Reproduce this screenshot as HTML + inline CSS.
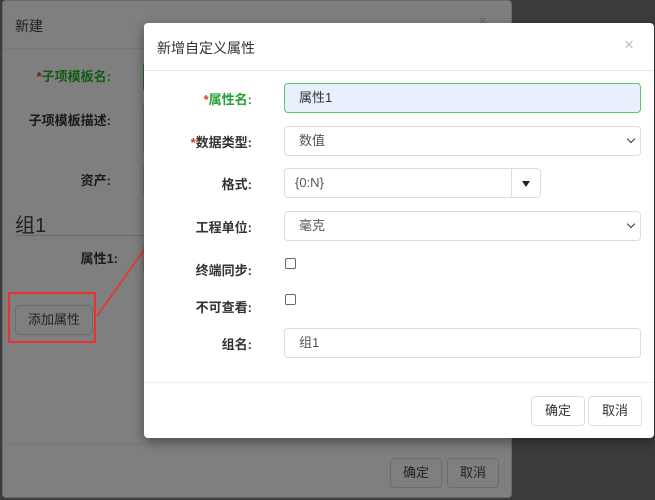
<!DOCTYPE html>
<html><head><meta charset="utf-8"><style>
*{box-sizing:border-box;margin:0;padding:0}
body{width:655px;height:500px;background:#3c3c3c;position:relative;overflow:hidden;font-family:"Liberation Sans","Noto Sans CJK SC",sans-serif;font-size:13px;color:#333}
.back{position:absolute;left:2px;top:0;width:510px;height:498px;background:#7f7f7f;border-radius:4px;border:1px solid #6a6a6a}
.ab{position:absolute}
.lbl{position:absolute;text-align:right;font-weight:bold;color:#1a1a1a}
.front{position:absolute;left:144px;top:23px;width:510px;height:415px;background:#fff;border-radius:4px;box-shadow:0 4px 12px rgba(0,0,0,.4)}
.fl{position:absolute;right:402px;font-weight:bold;color:#333;white-space:nowrap}
.in{position:absolute;left:140px;width:357px;height:30px;border:1px solid #ddd;border-radius:4px;padding-left:14px;line-height:28px;color:#555}
.chev{position:absolute;right:6px;top:9px;width:6px;height:6px;border-right:1.5px solid #333;border-bottom:1.5px solid #333;transform:rotate(45deg)}
.cb{position:absolute;left:141px;width:11px;height:11px;border:1px solid #666;border-radius:2px}
.btn{position:absolute;height:30px;border:1px solid #ddd;border-radius:4px;text-align:center;line-height:28px;color:#333}
</style></head><body>
<div class="back">
 <div class="ab" style="left:12px;top:15px;font-size:14px;color:#222">新建</div>
 <div class="ab" style="left:476px;top:12px;color:#666">×</div>
 <div class="ab" style="left:0;top:47px;width:508px;border-top:1px solid #777"></div>
 <div class="lbl" style="right:400px;top:65px;color:#145a14"><span style="color:#7a1a1a">*</span>子项模板名:</div>
 <div class="ab" style="left:140px;top:62px;width:4px;height:28px;border:1px solid #2a6a2a;border-right:none;border-radius:3px 0 0 3px"></div>
 <div class="lbl" style="right:400px;top:109px">子项模板描述:</div>
 <div class="ab" style="left:140px;top:104px;width:4px;height:48px;border:1px solid #707070;border-right:none"></div>
 <div class="lbl" style="right:400px;top:169px">资产:</div>
 <div class="ab" style="left:140px;top:164px;width:4px;height:30px;border:1px solid #707070;border-right:none"></div>
 <div class="ab" style="left:12px;top:208px;font-size:20px;color:#222">组1</div>
 <div class="ab" style="left:12px;top:234px;width:130px;border-top:1px solid #6a6a6a"></div>
 <div class="lbl" style="right:393px;top:247px">属性1:</div>
 <div class="ab" style="left:140px;top:244px;width:4px;height:28px;border:1px solid #707070;border-right:none"></div>
 <div class="btn" style="left:12px;top:304px;width:78px;border-color:#6c6c6c;color:#222">添加属性</div>
 <div class="ab" style="left:0;top:442px;width:508px;border-top:1px solid #777"></div>
 <div class="btn" style="left:387px;top:457px;width:52px;border-color:#6c6c6c;color:#222">确定</div>
 <div class="btn" style="left:444px;top:457px;width:52px;border-color:#6c6c6c;color:#222">取消</div>
</div>
<div class="ab" style="left:8px;top:292px;width:88px;height:51px;border:2px solid #e63232"></div>
<svg class="ab" style="left:0;top:0" width="655" height="500"><line x1="97" y1="316" x2="171" y2="212" stroke="#f03030" stroke-width="1.6"/><polygon points="177,205 166,212 173,217" fill="#f03030"/></svg>
<div class="front">
 <div class="ab" style="left:13px;top:15px;font-size:14px;color:#333">新增自定义属性</div>
 <div class="ab" style="left:480px;top:12px;color:#bbb;font-size:17px">×</div>
 <div class="ab" style="left:0;top:47px;width:510px;border-top:1px solid #e8e8e8"></div>
 <div class="fl" style="top:66px;color:#22a030"><span style="color:#d33">*</span>属性名:</div>
 <div class="in" style="top:60px;background:#e8f0fe;border-color:#5cc76a;color:#333">属性1</div>
 <div class="fl" style="top:109px"><span style="color:#d33">*</span>数据类型:</div>
 <div class="in" style="top:103px">数值<div class="chev"></div></div>
 <div class="fl" style="top:151px">格式:</div>
 <div class="in" style="top:145px;width:257px;padding-left:10px">{0:N}<div class="ab" style="left:226px;top:0;width:1px;height:28px;background:#ddd"></div><div class="ab" style="left:237px;top:12px;border-left:4px solid transparent;border-right:4px solid transparent;border-top:6px solid #222"></div></div>
 <div class="fl" style="top:194px">工程单位:</div>
 <div class="in" style="top:188px">毫克<div class="chev"></div></div>
 <div class="fl" style="top:237px">终端同步:</div>
 <div class="cb" style="top:235px"></div>
 <div class="fl" style="top:274px">不可查看:</div>
 <div class="cb" style="top:271px"></div>
 <div class="fl" style="top:311px">组名:</div>
 <div class="in" style="top:305px">组1</div>
 <div class="ab" style="left:0;top:359px;width:510px;border-top:1px solid #eee"></div>
 <div class="btn" style="left:387px;top:373px;width:54px">确定</div>
 <div class="btn" style="left:444px;top:373px;width:54px">取消</div>
</div>
</body></html>
